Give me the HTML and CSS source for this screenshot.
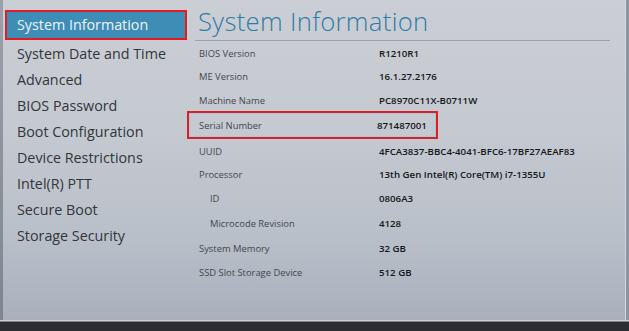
FILE: index.html
```html
<!DOCTYPE html>
<html>
<head>
<meta charset="utf-8">
<link rel="stylesheet" href="styles.css">
</head>
<body>
<div class="screen">
  <div class="content">
    <div class="edge-left"></div>
    <nav class="nav">
      <div class="nav-item selected">System Information</div>
      <div class="nav-item">System Date and Time</div>
      <div class="nav-item">Advanced</div>
      <div class="nav-item">BIOS Password</div>
      <div class="nav-item">Boot Configuration</div>
      <div class="nav-item">Device Restrictions</div>
      <div class="nav-item">Intel(R) PTT</div>
      <div class="nav-item">Secure Boot</div>
      <div class="nav-item">Storage Security</div>
    </nav>
    <main class="panel">
      <h1 class="title">System Information</h1>
      <div class="rule"></div>
      <div class="rows">
        <div class="row r1"><span class="label">BIOS Version</span><span class="value">R1210R1</span></div>
        <div class="row r2"><span class="label">ME Version</span><span class="value">16.1.27.2176</span></div>
        <div class="row r3"><span class="label">Machine Name</span><span class="value">PC8970C11X-B0711W</span></div>
        <div class="row r4 focused"><span class="label">Serial Number</span><span class="value">871487001</span></div>
        <div class="row r5"><span class="label">UUID</span><span class="value">4FCA3837-BBC4-4041-BFC6-17BF27AEAF83</span></div>
        <div class="row r6"><span class="label">Processor</span><span class="value">13th Gen Intel(R) Core(TM) i7-1355U</span></div>
        <div class="row r7 sub"><span class="label">ID</span><span class="value">0806A3</span></div>
        <div class="row r8 sub"><span class="label">Microcode Revision</span><span class="value">4128</span></div>
        <div class="row r9"><span class="label">System Memory</span><span class="value">32 GB</span></div>
        <div class="row r10"><span class="label">SSD Slot Storage Device</span><span class="value">512 GB</span></div>
      </div>
    </main>
    <div class="edge-right"></div>
  </div>
  <div class="footer"></div>
</div>
</body>
</html>
```

FILE: styles.css
```css
* { box-sizing: border-box; }
html, body { margin: 0; padding: 0; }
body {
  width: 629px;
  height: 331px;
  overflow: hidden;
  font-family: "Open Sans", "Noto Sans", sans-serif;
  background: #2b2d32;
}
.screen {
  width: 629px;
  height: 331px;
  display: flex;
  flex-direction: column;
}
.content {
  height: 321px;
  display: flex;
  background: linear-gradient(180deg, #cbced4 0%, #c5c9d0 40%, #b9bfc9 75%, #a9b0bc 100%);
  border-bottom: 1px solid #cfd3d8;
}
.edge-left {
  width: 3px;
  flex-shrink: 0;
  background: linear-gradient(180deg, #9aa1ab, #7d8592);
}
.nav {
  width: 185px;
  flex-shrink: 0;
  padding-top: 10px;
  display: flex;
  flex-direction: column;
}
.nav-item {
  height: 26px;
  padding-left: 14px;
  font-size: 14.3px;
  line-height: 26px;
  color: #32363b;
  white-space: nowrap;
}
.nav-item.selected {
  margin-left: 2px;
  width: 182px;
  height: 30px;
  line-height: 26px;
  padding-left: 10px;
  background: #3d8db6;
  color: #eef3f6;
  border: 2px solid #e11d24;
  margin-bottom: 1px;
}
.panel {
  flex: 1;
  padding-left: 10px;
  display: flex;
  flex-direction: column;
}
.title {
  margin: 6px 0 0 0;
  font-size: 25.7px;
  font-weight: 300;
  line-height: 31px;
  color: #2f7ca7;
  letter-spacing: 0.3px;
  white-space: nowrap;
}
.rule {
  margin: 3px 15px 0 -3px;
  height: 1px;
  background: #9ba2ab;
}
.rows {
  display: flex;
  flex-direction: column;
  padding-top: 0;
}
.row {
  height: 24px;
  flex-shrink: 0;
  display: flex;
  align-items: center;
  font-size: 9.4px;
  white-space: nowrap;
}
.label {
  width: 181px;
  flex-shrink: 0;
  padding-left: 1px;
  color: #43474d;
}
.sub .label { padding-left: 12px; }
.value {
  color: #15171a;
  font-weight: 600;
  font-size: 9.7px;
  letter-spacing: 0;
}
.r1 { height: 23px; padding-top: 2px; }
.r2 { height: 22px; padding-top: 2px; }
.r3 { height: 25px; padding-top: 3px; }
.r6 { height: 23px; }
.r7 { height: 23px; padding-top: 2px; }
.r8 { height: 26px; padding-top: 3px; }
.r9 { padding-top: 2px; }
.r10 { padding-top: 2px; }
.focused {
  margin-left: -11px;
  padding-left: 11px;
  width: 251px;
  height: 28px;
  border: 2px solid #e11d24;
  box-shadow: inset 0 0 0 1px #9ccbe0;
}
.focused .label { margin-left: -2px; }
.focused .value { margin-left: -2px; }
.edge-right {
  width: 4px;
  flex-shrink: 0;
  border-left: 1px solid #d4d8dd;
  background: #8d95a1;
}
.footer {
  flex: 1;
  border-top: 1px solid #7b818a;
  background: #2b2d32;
}
```
